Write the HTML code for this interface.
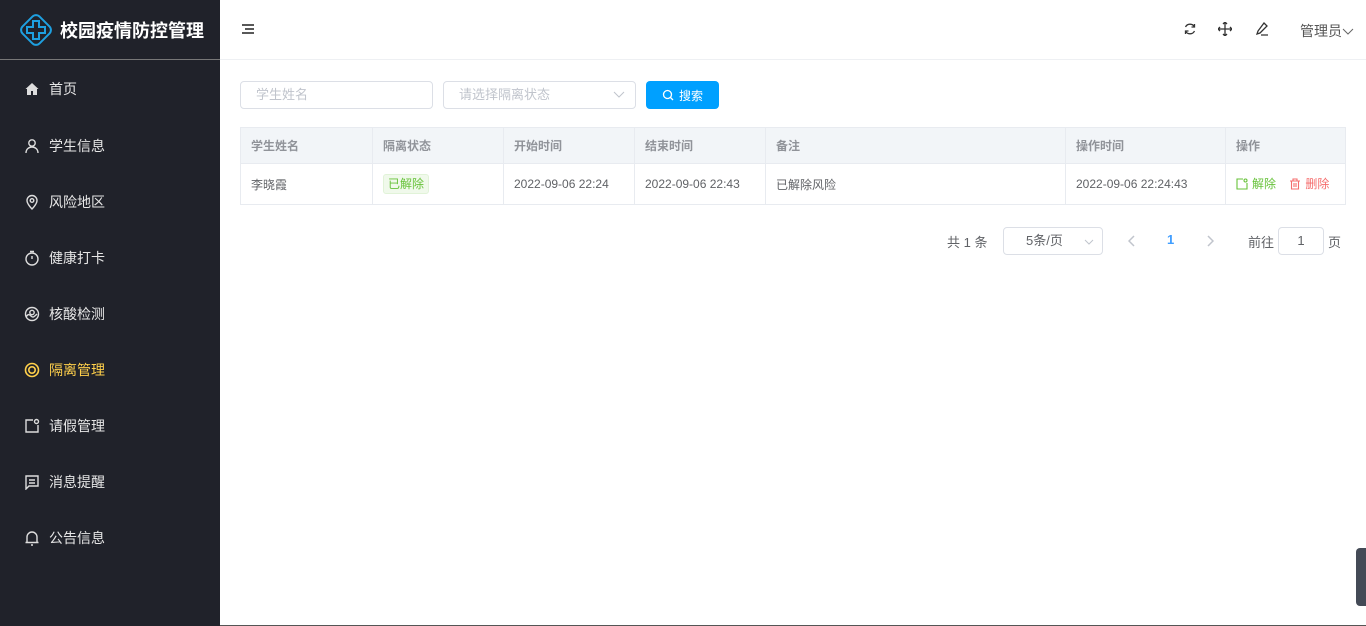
<!DOCTYPE html>
<html><head><meta charset="utf-8"><style>
*{box-sizing:border-box;margin:0;padding:0}
body{width:1366px;height:626px;overflow:hidden;font-family:"Liberation Sans","Noto Sans CJK SC",sans-serif;background:#fff;position:relative;font-size:13px;color:#606266}
.side{position:absolute;left:0;top:0;width:220px;height:626px;background:#20222a}
.logo{height:60px;border-bottom:1px solid #777;display:flex;align-items:center;padding-left:18px;color:#fff;font-weight:bold;font-size:18px}
.logo svg{margin-right:6px}
.item{height:56px;display:flex;align-items:center;padding-left:24px;color:#e6e6e6;font-size:14px}
.item svg{margin-right:9px}
.item.act{color:#ffd04b}
.top{position:absolute;left:220px;top:0;right:0;height:60px;border-bottom:1px solid #eef0f3}
.inp{position:absolute;height:28px;border:1px solid #dcdfe6;border-radius:4px;font-size:13px;color:#c0c4cc;padding-left:15px;line-height:26px}
.btn{position:absolute;left:646px;top:81px;width:73px;height:28px;background:#00a0ff;border-radius:4px;color:#fff;font-size:12px;display:flex;align-items:center;justify-content:center}
table{position:absolute;left:240px;top:127px;width:1106px;border-collapse:collapse;font-size:12px}
td{border:1px solid #e8ebf0;padding-left:10px}
tr.h td{background:#f2f5f8;height:36px;color:#909399;font-weight:bold}
tr.b td{height:41px;color:#606266}
.tag{display:inline-block;background:#f0f9eb;border:1px solid #e1f3d8;color:#67c23a;border-radius:3px;padding:0 4px;height:20px;line-height:18px;font-size:12px}
.act2{display:inline-flex;align-items:center;gap:4px}
</style></head><body>
<div class="side">
<div class="logo"><svg width="36" height="36" viewBox="0 0 36 36"><rect x="6" y="6" width="24" height="24" rx="5" transform="rotate(45 18 18)" fill="none" stroke="#1ea0e0" stroke-width="2"/><path d="M15 9h6v6h6v6h-6v6h-6v-6H9v-6h6z" fill="none" stroke="#1ea0e0" stroke-width="2"/></svg>校园疫情防控管理</div>
<div class="item" style="height:58px"><svg width="16" height="16" viewBox="0 0 16 16"><path d="M8 2L1.5 8H3v6h4v-4h2v4h4V8h1.5z" fill="#ddd"/></svg>首页</div>
<div class="item"><svg width="16" height="16" viewBox="0 0 16 16" fill="none" stroke="#ddd" stroke-width="1.4"><circle cx="8" cy="5" r="3.2"/><path d="M2 15c0-4 3-6 6-6s6 2 6 6"/></svg>学生信息</div>
<div class="item"><svg width="16" height="16" viewBox="0 0 16 16" fill="none" stroke="#ddd" stroke-width="1.4"><path d="M8 15s-5-5-5-8.5a5 5 0 0110 0C13 10 8 15 8 15z"/><circle cx="8" cy="6.5" r="1.8"/></svg>风险地区</div>
<div class="item"><svg width="16" height="16" viewBox="0 0 16 16" fill="none" stroke="#ddd" stroke-width="1.4"><circle cx="8" cy="9" r="6"/><path d="M8 6v3M6 1.5h4"/></svg>健康打卡</div>
<div class="item"><svg width="16" height="16" viewBox="0 0 16 16" fill="none" stroke="#ddd" stroke-width="1.4"><circle cx="8" cy="8" r="6.5"/><circle cx="8" cy="6.5" r="2.2"/><path d="M2 11c2-3 3-3 5-1s3 1 6-2"/></svg>核酸检测</div>
<div class="item act"><svg width="16" height="16" viewBox="0 0 16 16" fill="none" stroke="#ffd04b" stroke-width="1.6"><circle cx="8" cy="8" r="6.5"/><circle cx="8" cy="8" r="3.2"/></svg>隔离管理</div>
<div class="item"><svg width="16" height="16" viewBox="0 0 16 16" fill="none" stroke="#ddd" stroke-width="1.4"><path d="M9 2H2v12h12V7"/><circle cx="12.5" cy="3.5" r="2"/></svg>请假管理</div>
<div class="item"><svg width="16" height="16" viewBox="0 0 16 16" fill="none" stroke="#ddd" stroke-width="1.4"><path d="M2 2h12v10H5l-3 3z"/><path d="M5 6h6M5 9h6"/></svg>消息提醒</div>
<div class="item"><svg width="16" height="16" viewBox="0 0 16 16" fill="none" stroke="#ddd" stroke-width="1.4"><path d="M3 12.5V7a5 5 0 0110 0v5.5M1.5 12.5h13M7 15h2"/></svg>公告信息</div>
</div>
<div class="top">
<svg style="position:absolute;left:22px;top:24px" width="12" height="10" viewBox="0 0 12 10" stroke="#222" stroke-width="1.6"><path d="M0 1h12M3 5h9M0 9h12"/></svg>
<svg style="position:absolute;left:963px;top:22px" width="14" height="14" viewBox="0 0 14 14" fill="none" stroke="#333" stroke-width="1.3"><path d="M11.5 5A5 5 0 002.5 5M2.5 9a5 5 0 009 0M11.5 2v3h-3M2.5 12V9h3"/></svg>
<svg style="position:absolute;left:998px;top:22px" width="14" height="14" viewBox="0 0 14 14" fill="none" stroke="#333" stroke-width="1.3"><path d="M7 0v14M0 7h14M5 2l2-2 2 2M5 12l2 2 2-2M2 5L0 7l2 2M12 5l2 2-2 2"/></svg>
<svg style="position:absolute;left:1034px;top:21px" width="16" height="16" viewBox="0 0 16 16" fill="none" stroke="#333" stroke-width="1.3"><path d="M10 2l3 3-7 7-3 1 1-3z M7 14h7"/></svg>
<div style="position:absolute;left:1080px;top:21px;font-size:14px;color:#555">管理员<svg width="12" height="10" viewBox="0 0 12 10" fill="none" stroke="#666"><path d="M1 3l5 5 5-5"/></svg></div>
</div>
<div class="inp" style="left:240px;top:81px;width:193px">学生姓名</div>
<div class="inp" style="left:443px;top:81px;width:193px">请选择隔离状态<svg style="position:absolute;right:10px;top:9px" width="12" height="8" viewBox="0 0 12 8" fill="none" stroke="#c0c4cc"><path d="M1 1l5 5 5-5"/></svg></div>
<div class="btn"><svg width="12" height="12" viewBox="0 0 12 12" fill="none" stroke="#fff" stroke-width="1.3" style="margin-right:5px"><circle cx="5.5" cy="5.5" r="4"/><path d="M8.5 8.5l2.5 2.5"/></svg>搜索</div>
<table>
<tr class="h"><td style="width:132px">学生姓名</td><td style="width:131px">隔离状态</td><td style="width:131px">开始时间</td><td style="width:131px">结束时间</td><td style="width:300px">备注</td><td style="width:160px">操作时间</td><td>操作</td></tr>
<tr class="b"><td>李晓霞</td><td><span class="tag">已解除</span></td><td>2022-09-06 22:24</td><td>2022-09-06 22:43</td><td>已解除风险</td><td>2022-09-06 22:24:43</td><td><span class="act2" style="color:#67c23a"><svg width="12" height="12" viewBox="0 0 12 12" fill="none" stroke="#67c23a" stroke-width="1.1"><path d="M7 1H1v10h10V5"/><circle cx="9.5" cy="2.5" r="1.5"/></svg>解除</span>&nbsp;&nbsp;&nbsp;&nbsp;<span class="act2" style="color:#f56c6c"><svg width="12" height="12" viewBox="0 0 12 12" fill="none" stroke="#f56c6c" stroke-width="1.1"><path d="M1 3h10M4 3V1h4v2M2.5 3v8h7V3M5 5v4M7 5v4"/></svg>删除</span></td></tr>
</table>
<div style="position:absolute;left:947px;top:232px;font-size:13px">共 1 条</div>
<div class="inp" style="left:1003px;top:227px;width:100px;height:28px;color:#606266;padding-left:22px">5条/页<svg style="position:absolute;right:8px;top:11px" width="10" height="6" viewBox="0 0 10 6" fill="none" stroke="#c0c4cc"><path d="M1 1l4 4 4-4"/></svg></div>
<svg style="position:absolute;left:1128px;top:235px" width="8" height="12" viewBox="0 0 8 12" fill="none" stroke="#c0c4cc" stroke-width="1.5"><path d="M6 1L1 6l5 5"/></svg>
<div style="position:absolute;left:1167px;top:232px;color:#409eff;font-weight:bold">1</div>
<svg style="position:absolute;left:1206px;top:235px" width="8" height="12" viewBox="0 0 8 12" fill="none" stroke="#c0c4cc" stroke-width="1.5"><path d="M2 1l5 5-5 5"/></svg>
<div style="position:absolute;left:1248px;top:232px">前往</div>
<div class="inp" style="left:1278px;top:227px;width:46px;color:#606266;text-align:center;padding-left:0">1</div>
<div style="position:absolute;left:1328px;top:232px">页</div>
<div style="position:absolute;left:1356px;top:548px;width:10px;height:58px;background:#444a56;border-radius:4px 0 0 4px"></div>
<div style="position:absolute;left:220px;top:625px;right:0;height:1px;background:#555"></div>
</body></html>
